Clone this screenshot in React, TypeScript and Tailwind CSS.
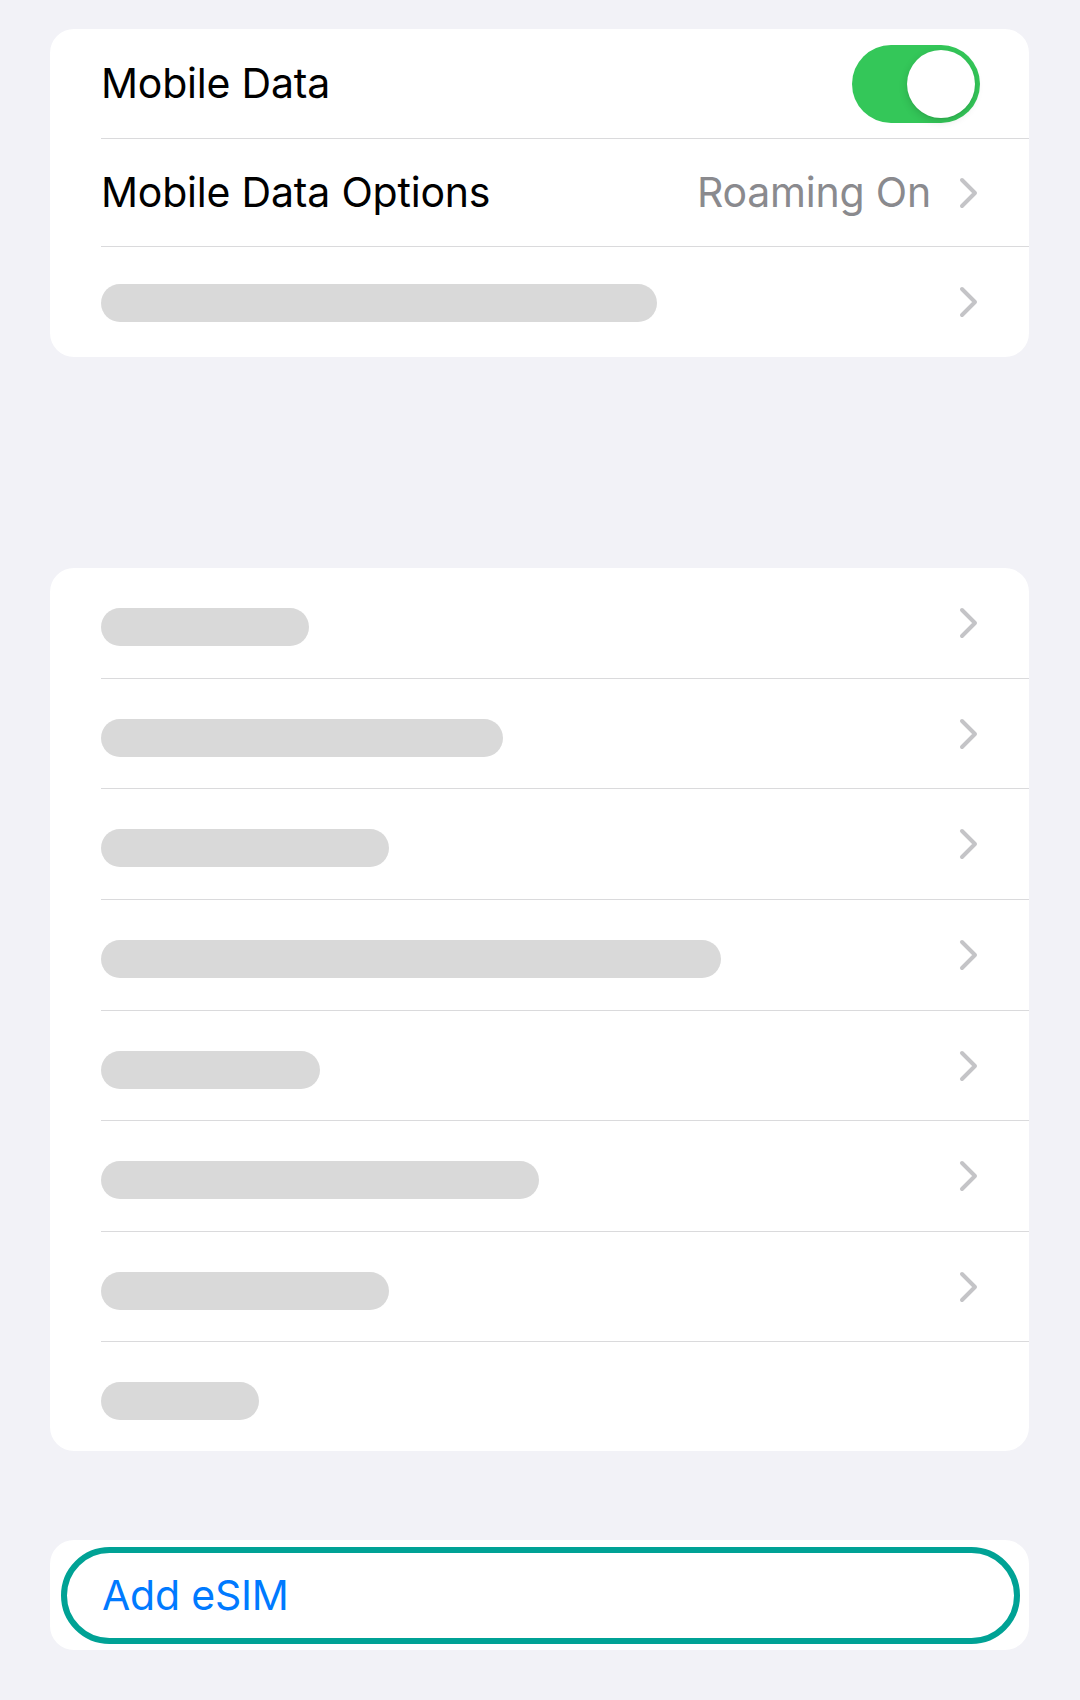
import React from 'react';

const font = { fontFamily: 'Inter, "Noto Sans", sans-serif' };

function Chevron() {
    return (
        <svg width="20" height="32" viewBox="0 0 20 32" fill="none" className="shrink-0 -mr-[1px]">
            <polyline points="3,3 16,16 3,29" stroke="#c4c4c7" strokeWidth="4" strokeLinecap="round" strokeLinejoin="round" />
        </svg>
    );
}

function Toggle() {
    return (
        <div className="w-[128px] h-[78px] rounded-full bg-[#34c759] p-[5px] flex justify-end items-center -mr-[1px]">
            <div className="w-[68px] h-[68px] rounded-full bg-white shadow-[0_3px_8px_rgba(0,0,0,0.15),0_1px_1px_rgba(0,0,0,0.06)]" />
        </div>
    );
}

function Bar({ w }: { w: string }) {
    return <div className={`${w} h-[38px] rounded-full bg-[#d9d9d9] mt-[8px]`} />;
}

interface Row {
    h: string;
    bar: string;
    chevron: boolean;
}

const listRows: Row[] = [
    { h: 'h-[111px]', bar: 'w-[208px]', chevron: true },
    { h: 'h-[110px]', bar: 'w-[402px]', chevron: true },
    { h: 'h-[111px]', bar: 'w-[288px]', chevron: true },
    { h: 'h-[111px]', bar: 'w-[620px]', chevron: true },
    { h: 'h-[110px]', bar: 'w-[219px]', chevron: true },
    { h: 'h-[111px]', bar: 'w-[438px]', chevron: true },
    { h: 'h-[110px]', bar: 'w-[288px]', chevron: true },
    { h: 'h-[109px]', bar: 'w-[158px]', chevron: false },
];

export default function App() {
    return (
        <div className="min-h-[1700px] bg-[#f2f2f7] pl-[50px] pr-[51px] pt-[29px]" style={font}>
            {/* mobile data */}
            <div className="bg-white rounded-[24px] pl-[51px] overflow-hidden">
                <div className="h-[110px] flex items-center justify-between border-b border-[#dadadc] pr-[50px]">
                    <span className="text-[41px] leading-none text-black tracking-[-0.2px]">Mobile Data</span>
                    <Toggle />
                </div>
                <div className="h-[108px] flex items-center border-b border-[#dadadc] pr-[51px]">
                    <span className="text-[41px] leading-none text-black tracking-[-0.2px]">Mobile Data Options</span>
                    <span className="ml-auto text-[41px] leading-none text-[#8a8a8e] tracking-[-0.2px] mr-[28px]">Roaming On</span>
                    <Chevron />
                </div>
                <div className="h-[110px] flex items-center justify-between pr-[51px]">
                    <div className="w-[556px] h-[38px] rounded-full bg-[#d9d9d9] mt-[2px]" />
                    <Chevron />
                </div>
            </div>

            {/* redacted list */}
            <div className="mt-[211px] bg-white rounded-[24px] pl-[51px] overflow-hidden">
                {listRows.map((r, i) => (
                    <div
                        key={i}
                        className={`${r.h} flex items-center justify-between pr-[51px] ${i < listRows.length - 1 ? 'border-b border-[#dadadc]' : ''}`}
                    >
                        <Bar w={r.bar} />
                        {r.chevron && <Chevron />}
                    </div>
                ))}
            </div>

            {/* add esim */}
            <div className="mt-[89px] bg-white rounded-[24px] h-[110px] pt-[7px] pb-[6px] pl-[11px] pr-[9px] flex">
                <button className="flex-1 flex items-center rounded-full border-[6px] border-[#00a295] pl-[35px] text-left">
                    <span className="text-[41px] leading-none text-[#007aff] tracking-[-0.2px]">Add eSIM</span>
                </button>
            </div>
        </div>
    );
}
